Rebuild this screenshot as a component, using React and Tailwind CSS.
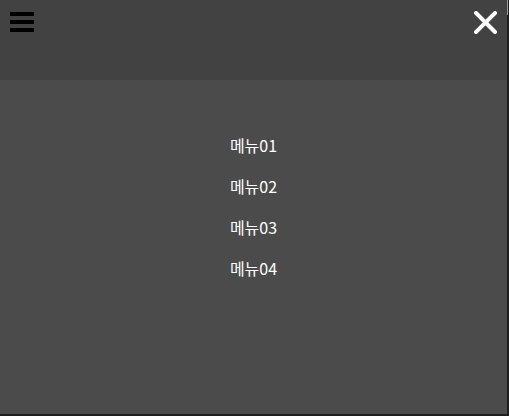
export default function App() {
	const menus = ["메뉴01", "메뉴02", "메뉴03", "메뉴04"];

	return (
		<div
			className="w-[509px] h-[416px] flex flex-col bg-[#1f1f1f] overflow-hidden"
			style={{ fontFamily: '"Noto Sans CJK KR", "Noto Sans", sans-serif' }}
		>
			<div className="flex flex-1">
				<div className="w-[507px] flex flex-col">
					{/* header */}
					<header className="h-[80px] bg-[#424242] flex justify-between items-start">
						<button className="mt-[12px] ml-[10px] flex flex-col gap-[4px]">
							<span className="block w-[24px] h-[4px] bg-black" />
							<span className="block w-[24px] h-[4px] bg-black" />
							<span className="block w-[24px] h-[4px] bg-black" />
						</button>
						<button className="mt-[11px] mr-[10px]">
							<svg width="23" height="23" viewBox="0 0 23 23">
								<path
									d="M2 2 L21 21 M21 2 L2 21"
									stroke="white"
									strokeWidth="4"
									strokeLinecap="square"
									fill="none"
								/>
							</svg>
						</button>
					</header>

					{/* menu */}
					<nav className="flex-1 bg-[#4b4b4b] pt-[44px]">
						<ul className="flex flex-col">
							{menus.map((m) => (
								<li
									key={m}
									className="h-[41px] flex items-center justify-center text-white text-[16px]"
								>
									{m}
								</li>
							))}
						</ul>
					</nav>
				</div>
				<div className="w-[2px] flex flex-col">
					<div className="h-[15px] w-[1px] bg-[#9a9a9a]" />
				</div>
			</div>
			<div className="h-[2px]" />
		</div>
	);
}
